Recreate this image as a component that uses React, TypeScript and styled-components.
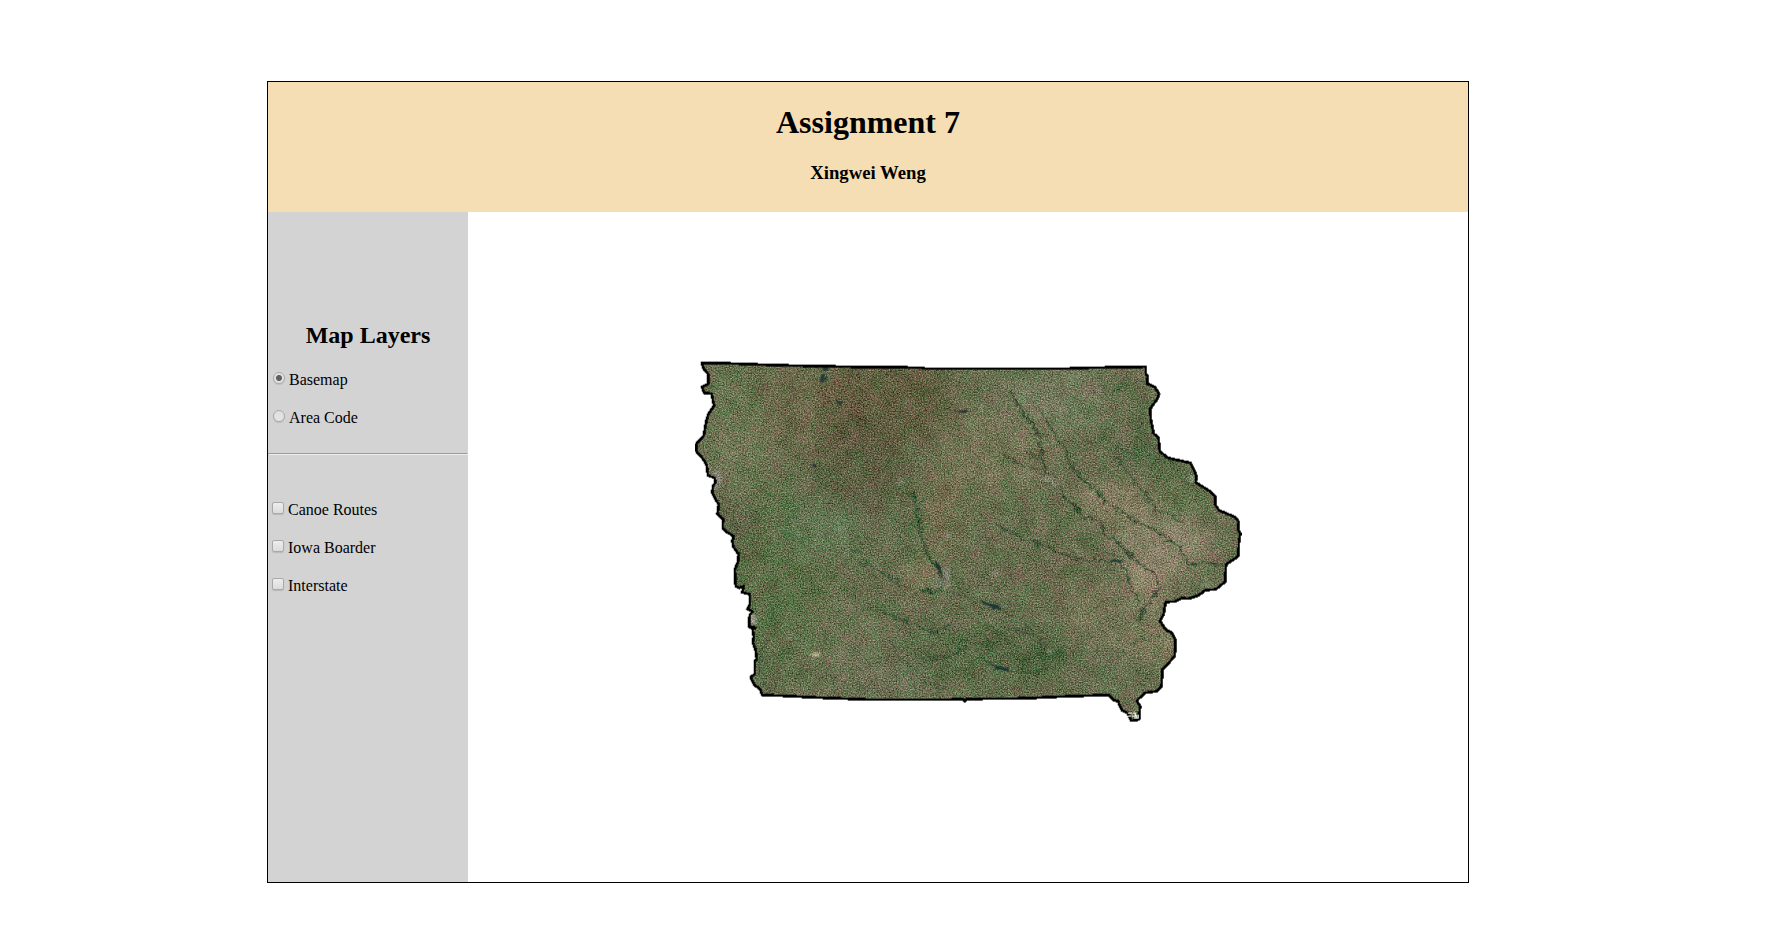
import React, { useState } from "react";
import styled, { createGlobalStyle, css } from "styled-components";

const GlobalStyle = createGlobalStyle`
  body {
    margin: 0;
    background: #fff;
    color: #000;
    font-family: "Liberation Serif", "Times New Roman", serif;
    font-size: 16px;
    line-height: 18px;
  }
`;

const Page = styled.main`
  box-sizing: border-box;
  height: 947px;
  padding: 81px 0 0 267px;
  overflow: hidden;
`;

const Frame = styled.div`
  width: 1200px;
  height: 800px;
  border: 1px solid #000;
  display: flex;
  flex-direction: column;
`;

const Header = styled.header`
  height: 130px;
  box-sizing: border-box;
  padding-top: 22px;
  background: #f5deb3;
  text-align: center;
`;

const Title = styled.h1`
  margin: 0 0 21px;
  font-size: 32px;
  line-height: 37px;
`;

const Author = styled.h3`
  margin: 0;
  font-size: 18.72px;
  line-height: 22px;
`;

const Content = styled.div`
  display: flex;
  flex: 1;
`;

const Sidebar = styled.aside`
  width: 200px;
  background: #d3d3d3;
`;

const SidebarTitle = styled.h2`
  margin: 109px 0 0;
  font-size: 24px;
  line-height: 28px;
  text-align: center;
`;

const LayerGroup = styled.div<{ $offset: number }>`
  display: flex;
  flex-direction: column;
  gap: 20px;
  margin-top: ${(p) => p.$offset}px;
`;

const Row = styled.label`
  display: flex;
  align-items: flex-start;
  height: 18px;
`;

const control = css`
  appearance: none;
  box-sizing: border-box;
  flex: none;
  width: 12px;
  height: 12px;
  border: 1px solid #a9a9a9;
  box-shadow: 0 1px 1px rgba(0, 0, 0, 0.12);
`;

const Radio = styled.input.attrs({ type: "radio" })`
  ${control}
  margin: 1px 4px 0 5px;
  border-radius: 50%;
  background: linear-gradient(#dedede, #e6e6e6);
  &:checked {
    background: radial-gradient(circle, #606060 0 2.6px, #e2e2e2 3.5px);
  }
`;

const Checkbox = styled.input.attrs({ type: "checkbox" })`
  ${control}
  margin: 1px 4px 0 4px;
  border-radius: 2px;
  background: linear-gradient(#ededed, #dcdcdc);
  &:checked {
    background: #666;
  }
`;

const Divider = styled.hr`
  margin: 26px 0 0;
  border: 1px solid;
  border-color: #9a9a9a #eee #eee #9a9a9a;
`;

const MapSvg = styled.svg`
  display: block;
  width: 1000px;
  height: 670px;
`;

const border =
  "M702.5 363.2 L726.7 363.7 754 364.7 781.7 365.7 823.3 366.6 862.7 367.4 921.7 368 925 369 1066.7 369 1093 368 1135 367.5 1146 367 1146 374 1148 376.7 1147.3 384 1155 387.3 1159.3 394.3 1157.7 399 1150.3 409.3 1151.3 421.7 1154 434 1158.7 438.3 1160 451.7 1168.3 458.3 1190.7 463.3 1196.7 476 1196 482.7 1210 491.7 1215.7 497.3 1215.7 505.3 1219.3 510.7 1235 517.3 1239 522 1238.3 529.3 1240.5 534.3 1239.3 541 1238.3 556.7 1226.3 564.7 1225.3 582.3 1216 589.7 1205.7 590.5 1198.3 596 1189 599 1182 598.7 1175 602 1166 602.3 1163.7 615 1160.3 621.7 1166.7 630.7 1172 633 1175.7 640 1175 656.7 1162.7 670 1161.7 686.7 1156.7 691.7 1145 693.3 1137 701 1140.3 706.7 1139.3 720 1131.7 721 1127.7 713.3 1122 710.5 1118.3 701.7 1113 700 1109.3 695.3 1083 696.2 1053 697.3 1025 698.8 967 699.3 965 701.5 963 699.5 948 700 870 700 837 698.7 811.7 697.7 787 696.3 762.7 695.5 760 689 755 685.7 751 677.7 755 674.3 755 661.7 757 659 755.7 650 753 643 754 637 752.7 629.3 756 628 749.3 627.3 750 615 753 612 747.7 609.3 750 605 750 594.7 742.3 592.7 744 586.7 739.3 588.3 736 586.7 735 570 738 563 739 555 733.3 546.7 732.7 541 734 536.7 726 531.7 723 528 723.3 520 717.7 514 719 505 716 500 712.7 493.3 713 487 716 482 714.5 478 708.3 476 706.7 465 703 459 696.7 451.7 696.7 444.3 704 436 706 424 708.3 415 714.3 406 711.7 394 704.3 393.3 702.3 387.3 708.7 384.3 708.7 375 703.3 368.3Z";

type Patch = [number, number, number, number, string, number];

const patches: Patch[] = [
  [800, 410, 70, 45, "#695f43", 0.5],
  [890, 400, 65, 48, "#5a5036", 0.6],
  [860, 465, 48, 50, "#535237", 0.6],
  [770, 560, 65, 80, "#53693f", 0.65],
  [760, 650, 40, 40, "#506840", 0.5],
  [735, 410, 26, 45, "#63714b", 0.7],
  [740, 455, 30, 45, "#6f7655", 0.6],
  [735, 522, 20, 25, "#5c5a44", 0.6],
  [822, 528, 42, 34, "#607553", 0.6],
  [1050, 400, 60, 35, "#6f775a", 0.75],
  [1000, 450, 60, 45, "#727052", 0.7],
  [940, 510, 22, 45, "#766a4b", 0.55],
  [922, 572, 16, 19, "#857655", 0.75],
  [1115, 500, 40, 20, "#867a60", 0.8],
  [1165, 545, 50, 32, "#8b8169", 0.8],
  [1145, 585, 23, 26, "#91836a", 0.8],
  [1088, 612, 20, 14, "#8c7d62", 0.7],
  [1140, 640, 36, 17, "#8a7d62", 0.65],
  [1170, 650, 9, 20, "#877d61", 0.7],
  [1155, 450, 32, 24, "#4d613f", 0.65],
  [1180, 495, 28, 22, "#546b41", 0.6],
  [985, 655, 100, 24, "#4c613c", 0.65],
  [1040, 660, 24, 16, "#3f5734", 0.45],
  [880, 676, 48, 23, "#6c6e56", 0.7],
  [840, 635, 44, 30, "#686f50", 0.6],
  [1050, 570, 60, 30, "#68664b", 0.45],
  [1110, 670, 35, 22, "#626d4f", 0.6],
  [915, 540, 12, 28, "#476540", 0.5],
];

const rivers: [string, number, string][] = [
  ["M915 493 L916 510 920 526 925 548 930 560 940 569 943 581 943 588 933 593 920 590", 3, "#25452a"],
  ["M906 490 L918 505 926 500", 2.4, "#3c5c39"],
  ["M1010 390 L1023 413 1037 429 1041 450 1045 472 1055 480 1062 490 1069 503 1080 510 1081 518 1098 520 1106 535 1118 543 1140 564 1158 577 1160 588 1147 605 1140 620", 2, "#29402a"],
  ["M1040 410 L1055 435 1063 445 1073 470 1090 485 1109 504 1136 522 1160 533 1180 548 1187 562 1192 565 1206 562 1226 565", 2, "#2c472a"],
  ["M1003 455 L1018 464 1037 470 1048 475 M1025 451 L1038 459 1048 462", 1.5, "#3a4b34"],
  ["M1105 445 L1126 470 1145 493 1157 510 1182 522", 2.2, "#3a5337"],
  ["M995 524 L1022 539 1048 547 1060 553 1085 561 1110 562 1121 560 1127 575 1139 603", 2.2, "#29482b"],
  ["M855 550 L870 564 885 575 900 582 M870 565 L860 563 M890 580 L910 590", 2.2, "#38533a"],
  ["M880 610 L920 628 935 633 950 625 M930 659 L948 657 970 647 M975 656 L991 664 1008 670", 2, "#304a2f"],
  ["M940 590 L970 599 983 603 1000 608 1020 622 1050 648 1065 658", 1.4, "#3c543b"],
  ["M969 570 L988 580 1000 593 M1080 540 L1120 558", 1.4, "#425b3a"],
  ["M888 640 L896 649 M906 662 L916 671 M895 655 L912 668 M920 680 L945 690 M1000 625 L1045 640", 2.4, "#43533c"],
  ["M905 395 L903 412 897 422 M1125 380 L1112 394 1140 380 M1100 436 L1130 455", 1.8, "#405a3b"],
  ["M760 660 L764 680 770 692 M765 640 L761 660 M1120 650 L1150 635 1162 638", 1.4, "#405840"],
  ["M985 625 L1002 634 1010 645 M1020 662 L1040 655 1058 660 M1022 670 L1036 674 1050 665 M960 640 L985 645 1000 640", 3, "#38532f"],
];

const lakes = [
  "M822 367 L829 367 828 371 824 371Z M822 375 L825 374 824 383 820 382Z M824 379 L828 376 826 382Z",
  "M836 401 L843 402 841 406 838 404Z M859 388 L861 389 859 391Z M813 464 L817 465 816 468 812 466Z M827 503 L831 503 829 505Z",
  "M955 412 L968 410 967 413 962 413Z",
  "M935 560 L941 567 941 573 936 567Z",
  "M981 600 L989 604 998 605 1001 611 996 609 990 611 993 608 983 604Z",
  "M989 664 L1000 667 1009 669 1009 672 1001 670 994 670 997 668Z",
  "M1110 561 L1115 560 1120 561 1121 564 1117 562 1111 562Z",
];

const towns: Patch[] = [
  [947, 573, 4, 6, "#92938a", 0.55],
  [946, 584, 5, 5, "#898c80", 0.45],
  [937, 582, 8, 7, "#76816f", 0.4],
  [717, 480, 5, 9, "#8e9388", 0.6],
  [753, 620, 4, 5, "#a2a299", 0.7],
  [1048, 479, 7, 3, "#9d9a8d", 0.45],
  [1055, 484, 4, 3, "#96988c", 0.45],
  [816, 655, 5, 1.7, "#cbb690", 0.9],
  [1192, 479, 4, 4, "#9a9d92", 0.6],
  [1006, 534, 3, 2, "#94958a", 0.5],
  [996, 574, 3, 3, "#899187", 0.4],
  [1006, 606, 4, 2, "#8c9084", 0.5],
  [1208, 586, 8, 4, "#7b8c70", 0.4],
  [982, 409, 2, 4, "#92978c", 0.5],
  [948, 535, 4, 3, "#838a7c", 0.4],
  [1100, 391, 3, 3, "#94978a", 0.4],
  [900, 482, 4, 4, "#7f8c78", 0.4],
  [800, 535, 4, 3, "#8b9586", 0.35],
  [840, 529, 4, 3, "#8b9586", 0.35],
  [1050, 652, 3, 3, "#9b9d92", 0.4],
];

function IowaMap() {
  return (
    <MapSvg viewBox="468 212 1000 670" role="img" aria-label="Iowa satellite basemap">
      <defs>
        <clipPath id="state">
          <path d={border} />
        </clipPath>
        <filter id="soften" x="-50%" y="-50%" width="200%" height="200%" colorInterpolationFilters="sRGB">
          <feGaussianBlur stdDeviation="11" />
        </filter>
        <filter id="softTown" x="-50%" y="-50%" width="200%" height="200%" colorInterpolationFilters="sRGB">
          <feGaussianBlur stdDeviation="1.2" />
        </filter>
        <filter id="meander" x="-5%" y="-5%" width="110%" height="110%" colorInterpolationFilters="sRGB">
          <feTurbulence type="fractalNoise" baseFrequency="0.16" numOctaves="3" seed="8" />
          <feDisplacementMap in="SourceGraphic" scale="10" xChannelSelector="R" yChannelSelector="G" />
        </filter>
        <filter
          id="grain"
          filterUnits="userSpaceOnUse"
          x="690"
          y="355"
          width="560"
          height="375"
          colorInterpolationFilters="sRGB"
        >
          <feTurbulence type="fractalNoise" baseFrequency="0.73" numOctaves="4" seed="4" result="fine" />
          <feColorMatrix
            in="fine"
            type="matrix"
            values="0.5 0 0.9 0 -0.2  0 0.3 0.9 0 -0.1  0.25 0.05 0.85 0 -0.075  0 0 0 0 1"
            result="speckle"
          />
          <feTurbulence type="fractalNoise" baseFrequency="0.06" numOctaves="5" seed="11" result="broad" />
          <feColorMatrix
            in="broad"
            type="matrix"
            values="0.5 0 0.5 0 0  -0.1 0 0.5 0 0.3  0.2 0 0.5 0 0.15  0 0 0 0 1"
            result="mottle"
          />
          <feComposite in="SourceGraphic" in2="mottle" operator="arithmetic" k2="1" k3="0.22" k4="-0.1" result="land" />
          <feComposite in="land" in2="speckle" operator="arithmetic" k2="1" k3="0.62" k4="-0.3" result="mix" />
          <feColorMatrix in="mix" type="matrix" values="1 0 0 0 0  0 1 0 0 0  0 0 1 0 0  0 0 0 0 1" />
        </filter>
      </defs>
      <g transform="translate(-0.3 -0.4)">
        <g clipPath="url(#state)">
          <g filter="url(#grain)">
            <rect x="690" y="355" width="560" height="375" fill="#62694a" />
            <g filter="url(#soften)">
              {patches.map(([cx, cy, rx, ry, fill, opacity], i) => (
                <ellipse key={i} cx={cx} cy={cy} rx={rx} ry={ry} fill={fill} opacity={opacity} />
              ))}
            </g>
            <g fill="none" strokeLinejoin="round" opacity="0.75" filter="url(#meander)">
              {rivers.map(([d, width, stroke], i) => (
                <path key={i} d={d} strokeWidth={width} stroke={stroke} />
              ))}
            </g>
            <g filter="url(#softTown)">
              {towns.map(([cx, cy, rx, ry, fill, opacity], i) => (
                <ellipse key={i} cx={cx} cy={cy} rx={rx} ry={ry} fill={fill} opacity={opacity} />
              ))}
            </g>
          </g>
          <path d={lakes.join(" ")} fill="#1d3439" opacity="0.9" />
        </g>
        <path d={border} fill="none" stroke="#000" strokeWidth="2.7" strokeLinejoin="round" shapeRendering="crispEdges" />
        <path
          d="M1128 713.5h4m-4 3h3m2-3h2v3h-3m4-2v4m2-4v4h-4"
          fill="none"
          stroke="#fff"
          strokeWidth="1"
          shapeRendering="crispEdges"
        />
      </g>
    </MapSvg>
  );
}

const basemaps = ["Basemap", "Area Code"];
const overlays = ["Canoe Routes", "Iowa Boarder", "Interstate"];

export default function App() {
  const [basemap, setBasemap] = useState("Basemap");
  return (
    <>
      <GlobalStyle />
      <Page>
        <Frame>
          <Header>
            <Title>Assignment 7</Title>
            <Author>Xingwei Weng</Author>
          </Header>
          <Content>
            <Sidebar>
              <SidebarTitle>Map Layers</SidebarTitle>
              <LayerGroup $offset={22}>
                {basemaps.map((name) => (
                  <Row key={name}>
                    <Radio name="basemap" checked={basemap === name} onChange={() => setBasemap(name)} />
                    {name}
                  </Row>
                ))}
              </LayerGroup>
              <Divider />
              <LayerGroup $offset={46}>
                {overlays.map((name) => (
                  <Row key={name}>
                    <Checkbox />
                    {name}
                  </Row>
                ))}
              </LayerGroup>
            </Sidebar>
            <IowaMap />
          </Content>
        </Frame>
      </Page>
    </>
  );
}
